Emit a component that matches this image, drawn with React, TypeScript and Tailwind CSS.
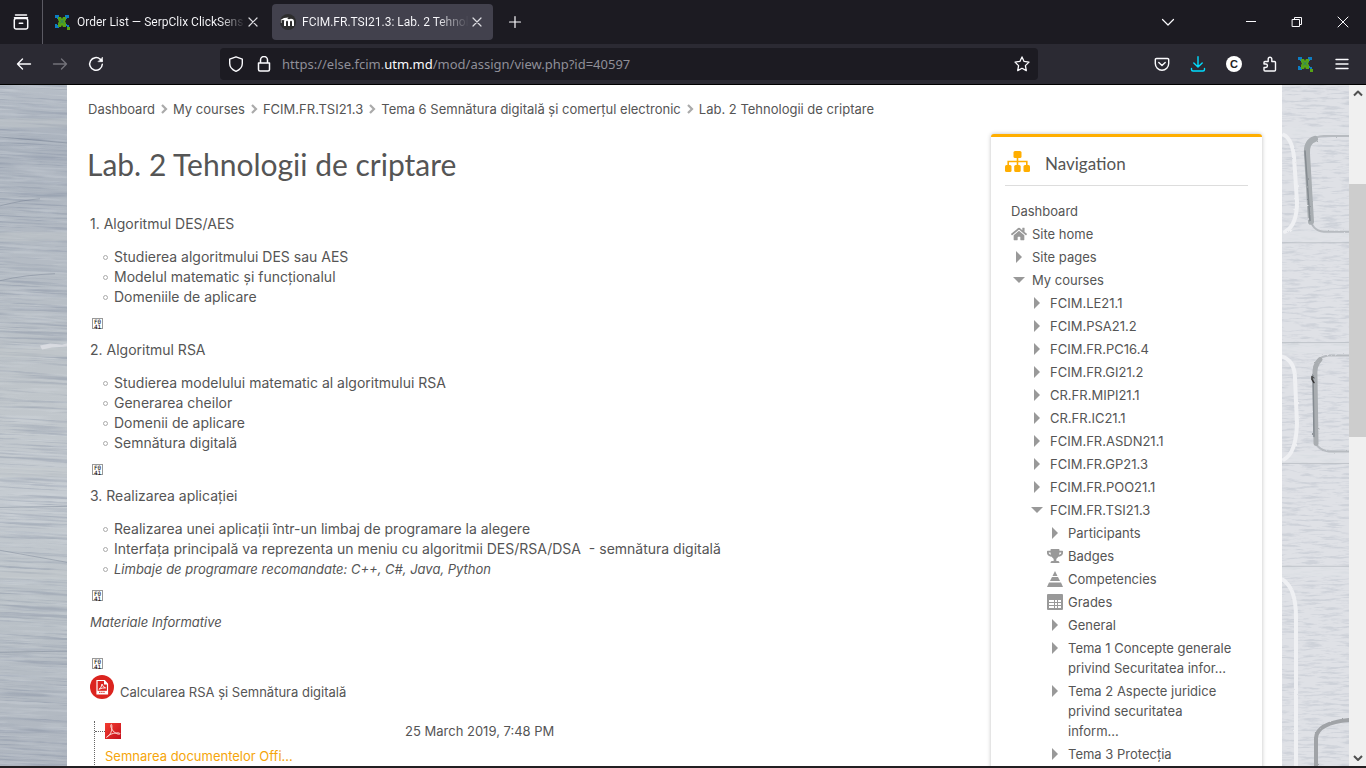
import React from "react";
import { FaHome, FaTrophy } from "react-icons/fa";

function Glyph({ children, className = "" }: { children: React.ReactNode; className?: string }) {
  return (
    <svg viewBox="0 0 16 16" fill="none" stroke="currentColor" strokeWidth="1.2" strokeLinecap="round" strokeLinejoin="round" className={`size-4 shrink-0 ${className}`} aria-hidden="true">
      {children}
    </svg>
  );
}

function SerpLogo() {
  return (
    <svg viewBox="0 0 16 16" className="size-4 shrink-0" aria-hidden="true">
      <g fill="#0d7dc4">
        <path d="M0 1h4v4H2V4H0zM10 1h4v3h-2v1h-2zM0 14v-4h2v1h2v3zM10 10h2v1h2v2h-2v-1h-2z" />
      </g>
      <path d="M3 3h3l1 2 1-2h3v3l-1 1.500 1 1.500v4H8l-1-2-1 2H3V9l1-1.500L3 6z" fill="#57a316" />
      <path d="M5 5.500l4 4M9 5.500l-4 4" stroke="#26806a" strokeWidth="1" />
      <rect x="12" y="13" width="3" height="3" fill="#57a316" />
    </svg>
  );
}

function MoodleLogo() {
  return (
    <svg viewBox="0 0 16 16" className="size-4 shrink-0" aria-hidden="true">
      <circle cx="8" cy="8" r="8" fill="#2d2d2d" />
      <path d="M5 12V8q0-2.300 2-2.300T9 8v4M9 8q0-2.300 2-2.300T13 8v4" fill="none" stroke="#fff" strokeWidth="2" />
      <path d="M0.500 6L4 4l4.500-.6L6 6.200z" fill="#fff" />
      <path d="M1.300 6v3" stroke="#fff" strokeWidth=".6" />
    </svg>
  );
}

const closeIcon = (
  <Glyph className="text-[#dddde2]">
    <path d="M4 4l8 8M12 4l-8 8" />
  </Glyph>
);

function TabBar() {
  return (
    <header className="flex h-11 shrink-0 items-center bg-[#1c1b22] font-['Roboto',sans-serif] text-[#fbfbfe]">
      <button aria-label="Recent browsing" className="flex h-11 w-[42px] items-center justify-center">
        <Glyph>
          <path d="M2.500 1h11M1.500 3.800h13M1.300 6.200v7a1.800 1.800 0 0 0 1.800 1.800h9.800a1.800 1.800 0 0 0 1.800-1.800v-7a1.800 1.800 0 0 0-1.800-1.800H3.100a1.800 1.800 0 0 0-1.800 1.800zM6.300 9.200h3.400" strokeWidth="1.500" />
        </Glyph>
      </button>
      <div className="h-full w-px bg-[#5b5a63]" />
      <div className="ml-3 flex w-[206px] items-center gap-1.5">
        <SerpLogo />
        <a href="#orders" className="-mr-1.5 min-w-0 flex-1 overflow-hidden whitespace-nowrap bg-gradient-to-r from-[#fbfbfe] from-85% to-transparent bg-clip-text text-xs text-transparent">Order List — SerpClix ClickSens</a>
        <button aria-label="Close Order List">{closeIcon}</button>
      </div>
      <div className="ml-[11px] flex h-9 w-[221px] items-center gap-1.5 rounded bg-[#42414d] px-2">
        <MoodleLogo />
        <a href="#lab" className="-mr-1.5 min-w-0 flex-1 overflow-hidden whitespace-nowrap bg-gradient-to-r from-[#fbfbfe] from-80% to-transparent bg-clip-text text-xs text-transparent">FCIM.FR.TSI21.3: Lab. 2 Tehnolo</a>
        <button aria-label="Close Lab. 2">{closeIcon}</button>
      </div>
      <button aria-label="New tab" className="ml-3.5">
        <Glyph><path d="M8 2.500v11M2.500 8h11" /></Glyph>
      </button>
      <button aria-label="List all tabs" className="ml-auto mr-[67px]">
        <Glyph><path d="M2.500 5.500L8 11l5.500-5.500" /></Glyph>
      </button>
      <div className="mr-[15px] flex gap-[30px]">
        <button aria-label="Minimize"><Glyph><path d="M3 7.500h10" strokeWidth="1" strokeLinecap="butt" /></Glyph></button>
        <button aria-label="Restore"><Glyph><path d="M3.500 5.500h7v7h-7zM5.500 5.500v-2h7v7h-2" strokeWidth="1" strokeLinejoin="miter" /></Glyph></button>
        <button aria-label="Close window"><Glyph><path d="M3 3l10 10M13 3L3 13" strokeWidth="1" /></Glyph></button>
      </div>
    </header>
  );
}

function Toolbar() {
  return (
    <div className="flex h-[41px] shrink-0 items-center border-b border-black bg-[#2b2a33] text-[#fbfbfe]">
      <nav className="flex w-[220px] gap-5 pl-4">
        <button aria-label="Back"><Glyph><path d="M14.500 8h-13M6.500 3L1.500 8l5 5" strokeWidth="1.400" /></Glyph></button>
        <button aria-label="Forward" className="text-[#73727a]"><Glyph><path d="M1.500 8h13M9.500 3l5 5-5 5" strokeWidth="1.400" /></Glyph></button>
        <button aria-label="Reload"><Glyph><path d="M14.300 8.300a6.300 6.300 0 1 1-2-5l1.700 1.700" strokeWidth="1.500" /><path d="M14.500 1.500v4.200h-4.200z" fill="currentColor" strokeWidth=".6" /></Glyph></button>
      </nav>
      <div className="flex h-8 w-[818px] items-center rounded bg-[#1c1b22] px-2">
        <Glyph><path d="M8 .8l6.300 2.400v4.200c0 3.800-2.800 6.400-6.300 7.900-3.500-1.500-6.300-4.100-6.300-7.900V3.200z" strokeWidth="1.400" /></Glyph>
        <Glyph className="ml-3"><path d="M2.500 7h11v6.500a1.500 1.500 0 0 1-1.500 1.500H4a1.500 1.500 0 0 1-1.500-1.500zM4.500 7V4a3.500 3.500 0 0 1 7 0v3" strokeWidth="1.500" /></Glyph>
        <a href="#address" className="ml-2.5 flex-1 pt-0.5 font-['Noto_Sans',sans-serif] text-[13px] text-[#8f8f98]">
          https://else.fcim.<span className="text-[#fbfbfe]">utm.md</span>/mod/assign/view.php?id=40597
        </a>
        <button aria-label="Bookmark this page"><Glyph><path d="M8 .9l2.100 4.500 4.900.7-3.600 3.500.9 5L8 12.300l-4.300 2.300.9-5L1 6.100l4.900-.7z" strokeWidth="1.300" /></Glyph></button>
      </div>
      <div className="ml-auto mr-4 flex gap-5">
        <button aria-label="Save to Pocket"><Glyph><path d="M2.500 2.500h11a1.200 1.200 0 0 1 1.200 1.200v3.800a6.700 6.700 0 0 1-13.400 0V3.700a1.200 1.200 0 0 1 1.200-1.200zM4.800 6.500L8 9.600l3.200-3.100" strokeWidth="1.400" /></Glyph></button>
        <button aria-label="Downloads" className="text-[#00ddff]"><Glyph><path d="M8 .8v10M3.800 7L8 11l4.200-4M1.500 12.500v1a1.500 1.500 0 0 0 1.500 1.500h10a1.500 1.500 0 0 0 1.500-1.500v-1" strokeWidth="1.400" /></Glyph></button>
        <button aria-label="Cookie extension" className="flex size-4 items-center justify-center rounded-full bg-white font-['Liberation_Sans',sans-serif] text-[11px] font-bold leading-4 text-[#222]">C</button>
        <button aria-label="Extensions"><Glyph><path d="M3 15h9.500a1 1 0 0 0 1-1V6.500a1 1 0 0 0-1-1H9.800V3a1.800 1.800 0 0 0-3.600 0v2.500H3a1 1 0 0 0-1 1V8h1.700a1.700 1.700 0 0 1 0 3.500H2V14a1 1 0 0 0 1 1z" strokeWidth="1.400" /></Glyph></button>
        <button aria-label="SerpClix"><SerpLogo /></button>
        <button aria-label="Open application menu"><Glyph><path d="M2 3.500h12M2 8h12M2 12.500h12" strokeWidth="1.400" /></Glyph></button>
      </div>
    </div>
  );
}

function PaintedWood() {
  return (
    <svg className="h-full w-full" preserveAspectRatio="none" viewBox="0 0 67 682" aria-hidden="true">
      <defs>
        <linearGradient id="wood" x1="0" y1="0" x2="0" y2="1">
          <stop offset="0" stopColor="#b7bec7" />
          <stop offset=".08" stopColor="#abb3be" />
          <stop offset=".3" stopColor="#b6bdc5" />
          <stop offset=".45" stopColor="#bfc5ca" />
          <stop offset=".6" stopColor="#c5cbd1" />
          <stop offset=".75" stopColor="#bbc2c8" />
          <stop offset="1" stopColor="#aeb5bf" />
        </linearGradient>
        <filter id="grain" x="0" y="0" width="100%" height="100%" colorInterpolationFilters="sRGB">
          <feTurbulence type="fractalNoise" baseFrequency="0.012 0.5" numOctaves="3" seed="4" />
          <feColorMatrix values="0 0 0 0 .4  0 0 0 0 .45  0 0 0 0 .55  4 0 0 0 -1.900" />
        </filter>
        <filter id="sheen" x="0" y="0" width="100%" height="100%" colorInterpolationFilters="sRGB">
          <feTurbulence type="fractalNoise" baseFrequency="0.02 0.35" numOctaves="4" seed="12" />
          <feColorMatrix values="0 0 0 0 .86  0 0 0 0 .88  0 0 0 0 .9  4 0 0 0 -1.900" />
        </filter>
      </defs>
      <rect width="67" height="682" fill="url(#wood)" />
      <g transform="rotate(3 33 341) scale(1.100 1.050)">
        <rect x="-20" y="-20" width="110" height="700" filter="url(#grain)" opacity=".26" />
        <rect x="-20" y="-20" width="110" height="700" filter="url(#sheen)" opacity=".25" />
      </g>
      <path d="M0 38h67M0 152h67M0 268h67M0 388h67M0 490h67" stroke="#c6cbcd" strokeWidth="9" opacity=".4" />
      <path d="M0 52l67 6M0 121q24-6 40-7M0 196q25-6 55-7M0 423l67-1M0 466l67 12M0 568l67-1" stroke="#626e80" strokeWidth=".6" fill="none" opacity=".6" />
      <path d="M40 261l10-2 12 1 5-1v3l-15 1-10 2z" fill="#e0e1e6" opacity=".8" />
    </svg>
  );
}

function WhiteBricks() {
  return (
    <svg className="h-full w-full" preserveAspectRatio="none" viewBox="0 0 67 682" aria-hidden="true">
      <defs>
        <filter id="plaster" x="0" y="0" width="100%" height="100%" colorInterpolationFilters="sRGB">
          <feTurbulence type="fractalNoise" baseFrequency="0.05 0.4" numOctaves="4" seed="9" />
          <feColorMatrix values="0 0 0 0 .66  0 0 0 0 .69  0 0 0 0 .74  4 0 0 0 -1.900" />
        </filter>
        <filter id="rough" x="-20%" y="-5%" width="140%" height="110%" colorInterpolationFilters="sRGB">
          <feTurbulence type="fractalNoise" baseFrequency="0.25" numOctaves="2" seed="3" />
          <feDisplacementMap in="SourceGraphic" scale="2" result="d" />
          <feGaussianBlur in="d" stdDeviation=".6" />
        </filter>
      </defs>
      <rect width="67" height="682" fill="#dfe1e6" />
      <rect width="67" height="682" filter="url(#plaster)" opacity=".3" />
      <path d="M0 42h67v10H0zM0 146h67v11H0zM0 260h67v9H0zM0 368h67v11H0zM0 482h67v10H0z" fill="#e0e3e7" opacity=".7" />
      <path d="M0 158h67M0 258h67M0 379h67M0 482h67" stroke="#b8bdc3" strokeWidth="1" opacity=".8" />
      <g fill="none" strokeLinecap="round" filter="url(#rough)">
        <path d="M2 50q8 4 10 22l3 45q0 24-12 30M0 272q13 4 13 22l2 45q-1 30-13 36M0 495q14 8 14 38v149" stroke="#eff0f3" strokeWidth="4" />
        <path d="M67 51H42q-18 1-18 16l4 64q1 15 14 16h25" stroke="#b7bbc0" strokeWidth="2" />
        <path d="M33 54q-9 3-8 15l4 68" stroke="#a9aeb2" strokeWidth="6" />
        <path d="M23 66l5 70" stroke="#858b91" strokeWidth="1.500" />
        <path d="M67 271H46q-13 2-14 15l1 67q0 12 14 14h20" stroke="#b7bbc0" strokeWidth="2" />
        <path d="M38 275q-6 5-5 18l1 66" stroke="#a9adb1" strokeWidth="5" />
        <path d="M31 290l1 62" stroke="#858b91" strokeWidth="1.500" />
        <path d="M67 636q-32 3-33 18v28" stroke="#a0a3a7" strokeWidth="4" />
        <path d="M30 292v3l2 3" stroke="#333" strokeWidth="1.500" />
      </g>
    </svg>
  );
}

const crumbs = ["Dashboard", "My courses", "FCIM.FR.TSI21.3", "Tema 6 Semnătura digitală și comerțul electronic", "Lab. 2 Tehnologii de criptare"];

function MissingGlyph() {
  return (
    <span className="ml-[2px] flex size-[11px] flex-col items-center justify-center border border-[#999] font-['DejaVu_Sans_Mono',monospace] text-[6px] leading-[5px] text-black">
      <span>F0</span>
      <span>41</span>
    </span>
  );
}

function Section({ title, items, italicLast = false }: { title: string; items: string[]; italicLast?: boolean }) {
  return (
    <section>
      <p>{title}</p>
      <ul className="mt-[13px]">
        {items.map((t, i) => (
          <li key={t} className={`flex items-center whitespace-pre pl-[13px] ${italicLast && i === items.length - 1 ? "text-[13px] italic leading-5" : ""}`}>
            <span className="mr-1.5 size-[5px] rounded-full border border-[#aaa]" />
            {t}
          </li>
        ))}
      </ul>
      <div className="my-[6px] flex h-[21px] items-center"><MissingGlyph /></div>
    </section>
  );
}

function PdfRound() {
  return (
    <svg viewBox="0 0 24 24" className="size-6 shrink-0" aria-hidden="true">
      <circle cx="12" cy="12" r="12" fill="#db241f" />
      <path d="M7 5.500h7.500L17.500 9v10H7z" fill="none" stroke="#fff" strokeWidth="1.200" />
      <path d="M14 5v4.500h4z" fill="#fff" />
      <path d="M9 14.300q2.800-1.800 3-5.300.8 3.300 3.600 3.900-3.500-.3-6.600 1.400z" fill="none" stroke="#fff" strokeWidth=".9" />
      <path d="M7 15.800h10.500V19H7z" fill="#fff" />
      <path d="M9 17.300h6" stroke="#db241f" strokeDasharray="1.500 .6" />
    </svg>
  );
}

function PdfSquare() {
  return (
    <svg viewBox="0 0 16 16" className="size-4" aria-hidden="true">
      <defs>
        <linearGradient id="pdf" x1="0" y1="0" x2="1" y2="1"><stop stopColor="#f43b2f" /><stop offset="1" stopColor="#c4101c" /></linearGradient>
      </defs>
      <rect width="16" height="16" fill="url(#pdf)" />
      <path d="M1.500 14.300c4-2 6-7 5.300-12-.4-2-1.500-.5-.8 1.800 1.100 3.800 4.800 7.200 8.500 7.100 1.200-.5 0-1.600-3-1.300-4 .3-7.500 1.600-10 4.400z" fill="none" stroke="#ffe4e0" strokeWidth=".9" />
    </svg>
  );
}

function Article() {
  return (
    <article className="min-w-0 flex-1">
      <nav className="ml-px flex items-center whitespace-nowrap" aria-label="Breadcrumb">
        {crumbs.map((c, i) => (
          <React.Fragment key={c}>
            {i > 0 && (
              <svg viewBox="0 0 10 10" className="mx-1 size-2.5" fill="none" stroke="#aaa" strokeWidth="2.200" aria-hidden="true">
                <path d="M3 1l4 4-4 4" />
              </svg>
            )}
            <a href="#crumb">{c}</a>
          </React.Fragment>
        ))}
      </nav>
      <h1 className="mt-6 font-['Lato',sans-serif] text-[30px] leading-[42px]">Lab. 2 Tehnologii de criptare</h1>
      <div className="mt-[29px] pl-[3px] text-sm leading-5">
        <Section title="1. Algoritmul DES/AES" items={["Studierea algoritmului DES sau AES", "Modelul matematic și funcționalul", "Domeniile de aplicare"]} />
        <Section title="2. Algoritmul RSA" items={["Studierea modelului matematic al algoritmului RSA", "Generarea cheilor", "Domenii de aplicare", "Semnătura digitală"]} />
        <Section title="3. Realizarea aplicației" italicLast items={["Realizarea unei aplicații într-un limbaj de programare la alegere", "Interfața principală va reprezenta un meniu cu algoritmii DES/RSA/DSA  - semnătura digitală", "Limbaje de programare recomandate: C++, C#, Java, Python"]} />
        <p className="text-[13px] italic leading-5">Materiale Informative</p>
        <div className="mt-[26px]"><MissingGlyph /></div>
        <div className="text-[13px] leading-5">
          <a href="#rsa" className="mt-1.5 flex items-start gap-1.5"><PdfRound /><span className="mt-[7px]">Calcularea RSA și Semnătura digitală</span></a>
          <div className="ml-1 mt-[19px] h-24 border-l border-dotted border-[#666]">
            <div className="flex items-center">
              <span className="w-2.5 border-t border-dotted border-[#666]" />
              <PdfSquare />
              <span className="ml-[284px]">25 March 2019, 7:48 PM</span>
            </div>
            <a href="#sign" className="ml-2.5 mt-[5px] block text-[#f5a50a]">Semnarea documentelor Offi...</a>
          </div>
        </div>
      </div>
    </article>
  );
}

type Kind = "closed" | "open" | "home" | "badge" | "cone" | "table";

function NavIcon({ kind }: { kind: Kind }) {
  if (kind === "home") return <FaHome className="size-4" />;
  if (kind === "badge") return <FaTrophy className="size-4" />;
  return (
    <svg viewBox="0 0 16 16" fill="currentColor" className="size-4" aria-hidden="true">
      {kind === "closed" && <path d="M5 2l6 6-6 6z" />}
      {kind === "open" && <path d="M2 5h12L8 11z" />}
      {kind === "cone" && <path d="M8 0l2.500 5h-5zM5 6h6l2 4H3zM2 11.500h12L16 16H0z" />}
      {kind === "table" && <path fillRule="evenodd" d="M1 0h14a1 1 0 0 1 1 1v14a1 1 0 0 1-1 1H1a1 1 0 0 1-1-1V1a1 1 0 0 1 1-1zM2 6v2h5V6zM8 6v2h2V6zM11 6v2h3V6zM2 9v2h5V9zM8 9v2h2V9zM11 9v2h3V9zM2 12v2h5v-2zM8 12v2h2v-2zM11 12v2h3v-2z" />}
    </svg>
  );
}

function Node({ kind, label, children }: { kind: Kind; label: string; children?: React.ReactNode }) {
  return (
    <li>
      <a href="#node" className="flex gap-[5px]">
        <span className="mt-0.5 shrink-0 text-[#999]"><NavIcon kind={kind} /></span>
        <span>{label}</span>
      </a>
      {children && <ul className="mt-[3px] space-y-[3px] pl-[18px]">{children}</ul>}
    </li>
  );
}

const courses = ["FCIM.LE21.1", "FCIM.PSA21.2", "FCIM.FR.PC16.4", "FCIM.FR.GI21.2", "CR.FR.MIPI21.1", "CR.FR.IC21.1", "FCIM.FR.ASDN21.1", "FCIM.FR.GP21.3", "FCIM.FR.POO21.1"];

function Navigation() {
  return (
    <aside className="mt-[35px] h-[800px] w-[271px] shrink-0 rounded-t-[3px] border-t-[3px] border-[#ffae00] bg-white px-3.5 shadow-[0_0_4px_rgba(0,0,0,0.25)]">
      <h2 className="flex h-[49px] items-center gap-[15px] border-b border-[#ddd] font-['Lato',sans-serif] text-[17px]">
        <svg viewBox="0 0 25 21" className="h-[21px] w-[25px] text-[#ffae00]" fill="currentColor" aria-hidden="true">
          <rect x="8.500" width="8" height="7" rx="1.500" />
          <rect y="14" width="6.500" height="7" rx="1.500" />
          <rect x="9.200" y="14" width="6.500" height="7" rx="1.500" />
          <rect x="18.500" y="14" width="6.500" height="7" rx="1.500" />
          <path d="M12.500 6v9M3.200 15v-4.500h18.600V15" fill="none" stroke="currentColor" strokeWidth="1.600" />
        </svg>
        <span className="pt-1.5">Navigation</span>
      </h2>
      <div className="mt-[15px] pl-1.5 pr-4">
        <a href="#dashboard">Dashboard</a>
        <ul className="mt-[3px] space-y-[3px]">
          <Node kind="home" label="Site home" />
          <Node kind="closed" label="Site pages" />
          <Node kind="open" label="My courses">
            {courses.map((c) => <Node key={c} kind="closed" label={c} />)}
            <Node kind="open" label="FCIM.FR.TSI21.3">
              <Node kind="closed" label="Participants" />
              <Node kind="badge" label="Badges" />
              <Node kind="cone" label="Competencies" />
              <Node kind="table" label="Grades" />
              <Node kind="closed" label="General" />
              <Node kind="closed" label="Tema 1 Concepte generale privind Securitatea infor..." />
              <Node kind="closed" label="Tema 2 Aspecte juridice privind securitatea inform..." />
              <Node kind="closed" label="Tema 3 Protecția" />
            </Node>
          </Node>
        </ul>
      </div>
    </aside>
  );
}

function ScrollRail() {
  return (
    <div className="flex w-[17px] shrink-0 flex-col items-center bg-[#f0f0f0] text-[#505050]">
      <Glyph className="my-px"><path d="M4 9.500L8 5.500l4 4" strokeWidth="2" strokeLinecap="butt" /></Glyph>
      <div className="mt-[81px] h-[253px] w-full bg-[#cdcdcd]" />
      <Glyph className="mt-auto"><path d="M4 6l4 4 4-4" strokeWidth="2" strokeLinecap="butt" /></Glyph>
    </div>
  );
}

export default function App() {
  return (
    <div className="flex h-screen flex-col overflow-hidden font-['Noto_Sans',sans-serif]">
      <TabBar />
      <Toolbar />
      <div className="flex min-h-0 flex-1">
        <div className="w-[67px] shrink-0 overflow-hidden"><PaintedWood /></div>
        <main className="flex min-w-0 flex-1 overflow-hidden bg-white px-5 pt-3.5 font-['Inter',sans-serif] text-[13px] leading-5 text-[#555]">
          <Article />
          <Navigation />
        </main>
        <div className="w-[67px] shrink-0 overflow-hidden"><WhiteBricks /></div>
        <ScrollRail />
      </div>
      <footer className="h-0.5 shrink-0 bg-[#231f22]" />
    </div>
  );
}
